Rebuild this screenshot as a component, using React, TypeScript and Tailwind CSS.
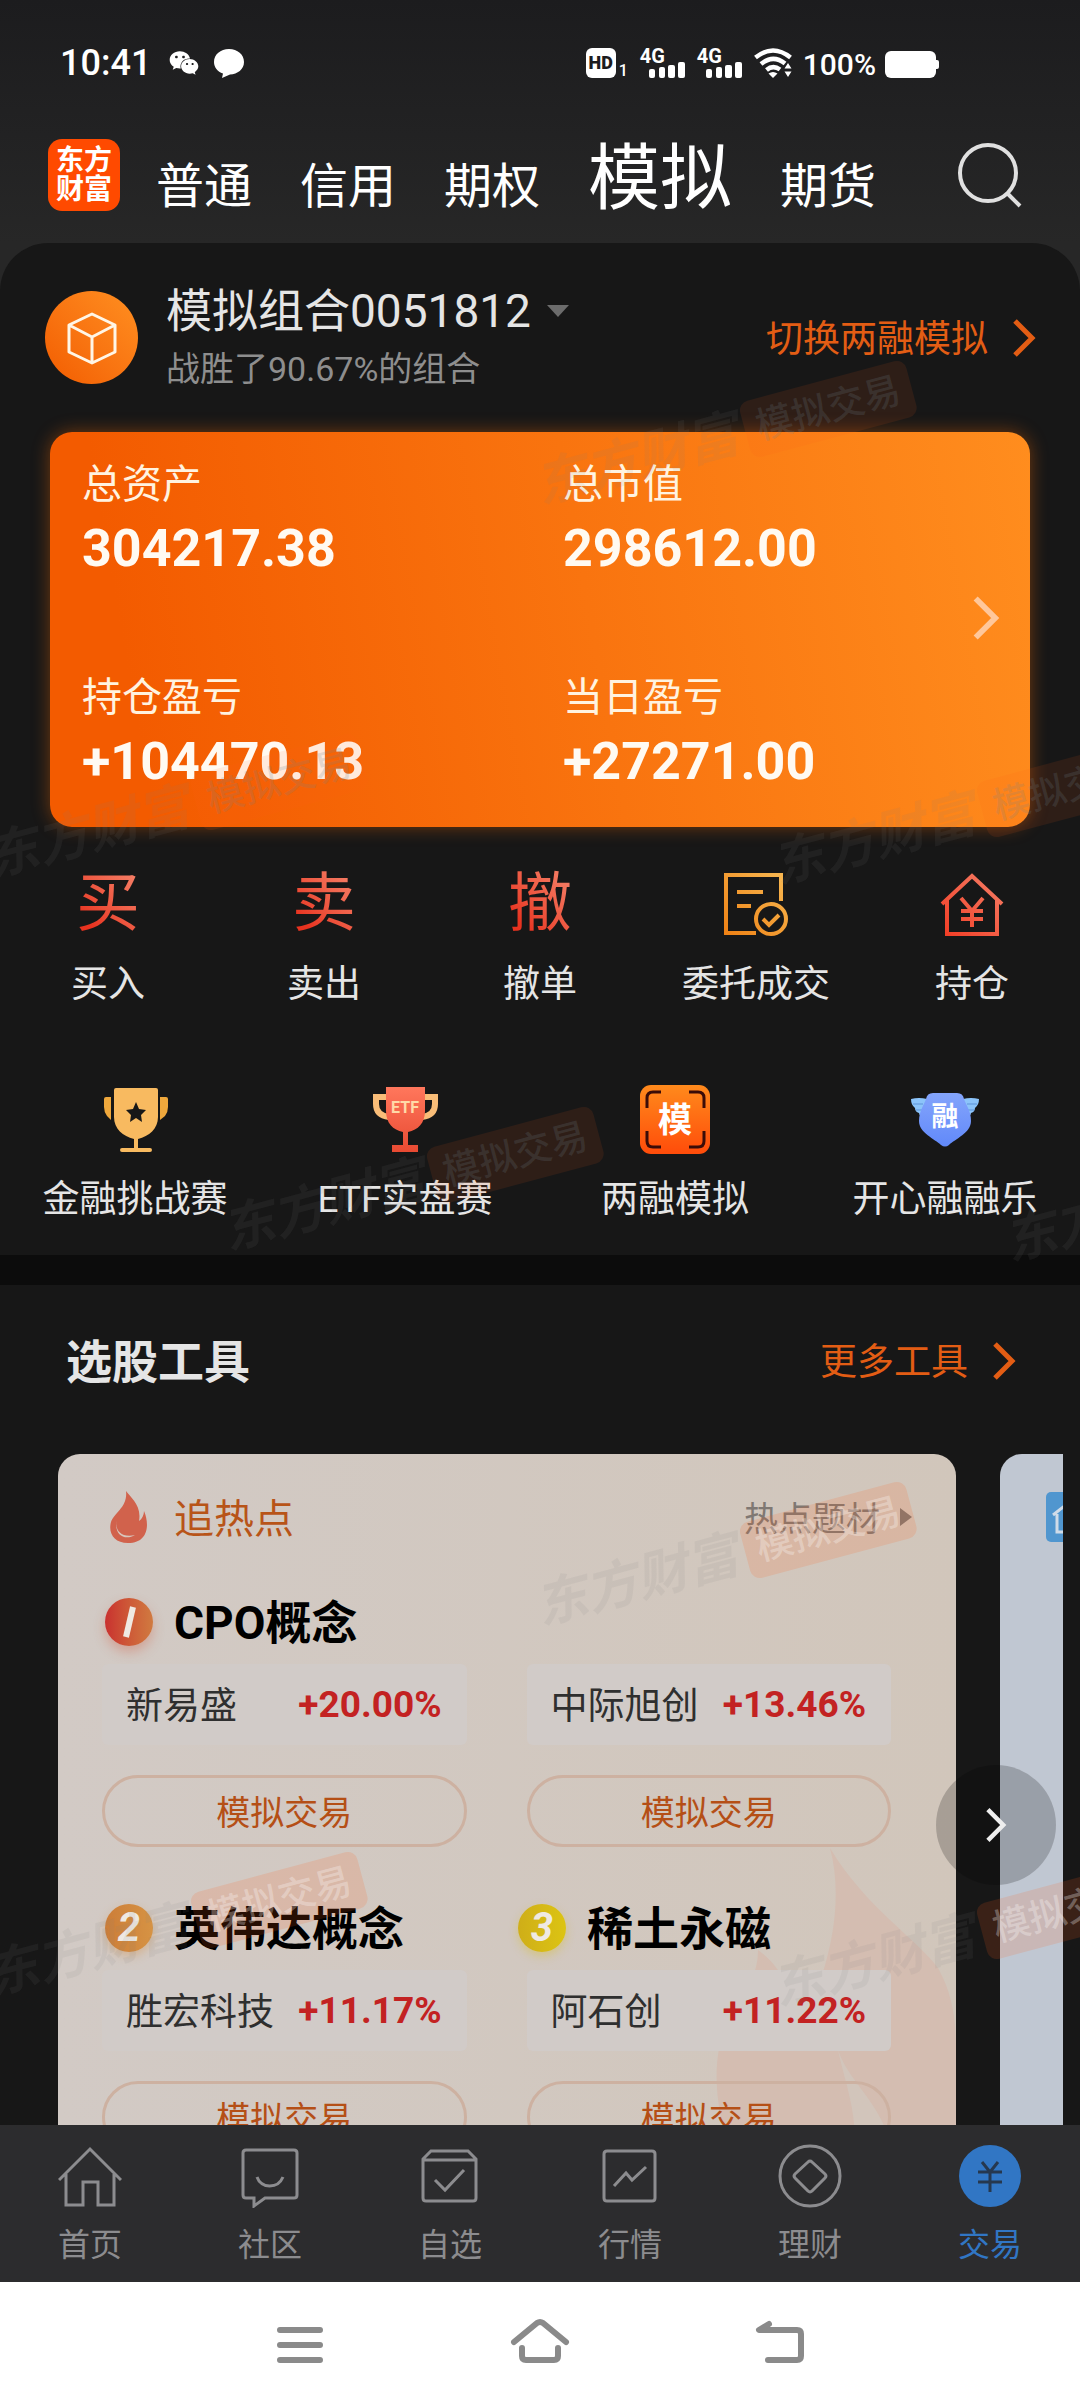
import React, { useState } from "react";
import { FaWeixin } from "react-icons/fa";

const accountTabs = ["普通", "信用", "期权", "模拟", "期货"];

const assets = [
  { label: "总资产", value: "304217.38" },
  { label: "总市值", value: "298612.00" },
  { label: "持仓盈亏", value: "+104470.13" },
  { label: "当日盈亏", value: "+27271.00" },
];

const firstStocks = [
  { name: "新易盛", change: "+20.00%" },
  { name: "中际旭创", change: "+13.46%" },
];

const secondStocks = [
  { name: "胜宏科技", change: "+11.17%" },
  { name: "阿石创", change: "+11.22%" },
];

// Centre points of the repeated background marks
const watermarks = [
  { x: 724, y: 437, light: false },
  { x: 175, y: 810, light: false },
  { x: 961, y: 817, light: false },
  { x: 411, y: 1183, light: false },
  { x: 1193, y: 1194, light: false },
  { x: 724, y: 1558, light: true },
  { x: 175, y: 1928, light: true },
  { x: 961, y: 1939, light: true },
];

function Chevron({ className }: { className: string }) {
  return (
    <svg viewBox="0 0 24 40" fill="none" stroke="currentColor" className={className} aria-hidden="true">
      <path d="M3 3 L20 20 L3 37" strokeWidth="5" />
    </svg>
  );
}

function SignalBars() {
  return (
    <span className="relative block h-[30px] w-[45px]">
      <span className="absolute left-0 top-0 text-[20px] font-bold leading-[16px]">4G</span>
      <svg viewBox="0 0 45 30" className="h-[30px] w-[45px]" fill="currentColor" aria-hidden="true">
        <rect x="9" y="21" width="6" height="9" rx="2" />
        <rect x="19" y="19" width="6" height="11" rx="2" />
        <rect x="28" y="17" width="7" height="13" rx="2" />
        <rect x="38" y="14" width="7" height="16" rx="2" />
      </svg>
    </span>
  );
}

function StatusBar() {
  return (
    <div className="flex h-[126px] shrink-0 items-center pl-[60px] pr-[141px] text-white">
      <span className="text-[36px] font-medium leading-[40px]">10:41</span>
      <FaWeixin className="ml-[18px] h-[30px] w-[30px]" aria-hidden="true" />
      <svg viewBox="0 0 30 30" className="ml-[15px] h-[30px] w-[30px]" fill="currentColor" aria-hidden="true">
        <path d="M15 1 C23.500 1 30 6.500 30 14 C30 21.500 23.500 26 16 26.500 L8 30 L9 25.500 C3.500 23.500 0 19.500 0 14 C0 6.500 6.500 1 15 1 Z" />
      </svg>
      <div className="ml-auto flex items-end">
        <span className="flex h-[30px] w-[30px] items-center justify-center rounded-[6px] bg-white text-[18px] font-black leading-[30px] text-[#1c1c1e]">
          HD
        </span>
        <span className="ml-[3px] mr-3 text-[16px] font-medium leading-[14px]">1</span>
        <SignalBars />
        <span className="w-3" />
        <SignalBars />
        <svg viewBox="0 0 38 30" className="ml-[12px] h-[30px] w-[38px]" aria-hidden="true">
          <g fill="none" stroke="#fff" strokeWidth="4.500">
            <path d="M1.500 9.500 Q19 -4.500 36.500 9.500" />
            <path d="M7 16 Q19 6 31 15.500" />
            <path d="M12.500 22 Q19 16.500 26 21.500" />
          </g>
          <path d="M14.500 25.500 Q19 22.500 23.500 25.500 L19 30 Z" fill="#fff" />
          <path d="M34 15 L37.500 20.500 H30.500 Z M34 29 L37.500 23.500 H30.500 Z" fill="#fff" />
        </svg>
        <span className="ml-[11px] text-[30px] font-medium leading-[26px]">100%</span>
        <svg viewBox="0 0 54 27" className="ml-[9px] h-[27px] w-[54px]" fill="currentColor" aria-hidden="true">
          <rect width="51" height="27" rx="6" />
          <rect x="48" y="9" width="6" height="9" rx="2" />
        </svg>
      </div>
    </div>
  );
}

function Header() {
  const [activeTab, setActiveTab] = useState("模拟");

  return (
    <header className="flex h-[117px] shrink-0 items-center pb-[19px] pl-12 pr-[57px] text-white">
      <div className="w-[72px] shrink-0 rounded-[14px] bg-[#ff4a00] py-[7px] text-center text-[28px] font-bold leading-[29px]">
        东方
        <br />
        财富
      </div>
      <nav className="ml-9 flex items-baseline gap-12 pt-4">
        {accountTabs.map((tab) => (
          <button
            key={tab}
            onClick={() => setActiveTab(tab)}
            className={
              tab === activeTab
                ? "text-[72px] leading-[80px]"
                : "text-[48px] leading-[80px]"
            }
          >
            {tab}
          </button>
        ))}
      </nav>
      <button aria-label="搜索" className="ml-auto">
        <svg viewBox="0 0 66 66" className="h-[66px] w-[66px]" fill="none" stroke="#e0e0e0" strokeWidth="4" aria-hidden="true">
          <circle cx="31" cy="31" r="28" />
          <path d="M50 51 L63 64" />
        </svg>
      </button>
    </header>
  );
}

function PortfolioRow() {
  return (
    <div className="flex h-[189px] items-center pl-[45px] pr-[44px]">
      <div className="flex h-[93px] w-[93px] items-center justify-center rounded-full bg-linear-to-tr from-[#f25c00] to-[#ff8f20]">
        <svg viewBox="0 0 50 54" className="h-[54px] w-[50px]" fill="none" stroke="#fff6e6" strokeWidth="3" strokeLinejoin="round" aria-hidden="true">
          <path d="M25 3 L48 14 V41 L25 52 L2 41 V14 Z M2 14 L25 26 L48 14 M25 26 V52" />
        </svg>
      </div>
      <div className="ml-7 pt-1">
        <button className="flex items-center text-[46px] leading-[58px] text-[#e5e5e5]">
          模拟组合0051812
          <svg viewBox="0 0 22 12" className="ml-4 h-3 w-[22px]" fill="#6c6c6c" aria-hidden="true">
            <path d="M0 0 H22 L11 12 Z" />
          </svg>
        </button>
        <p className="text-[34px] leading-[58px] text-[#8e8e8e]">战胜了90.67%的组合</p>
      </div>
      <a href="#margin" className="ml-auto flex items-center text-[37px] leading-[48px] text-[#e35d14]">
        <span className="pt-1">切换两融模拟</span>
        <Chevron className="ml-6 h-10 w-6" />
      </a>
    </div>
  );
}

function AssetCard() {
  return (
    <section className="mx-[50px] flex items-center rounded-[22px] bg-linear-[80deg] from-[#f35b00] from-10% to-[#ff8d1e] pb-[29px] pl-8 pt-[25px] shadow-[0_0_18px_rgba(255,110,0,0.4)]">
      <dl className="grid flex-1 grid-cols-2 gap-x-3 gap-y-[85px] text-[#fff3e0]">
        {assets.map((asset) => (
          <div key={asset.label}>
            <dt className="text-[40px] leading-[56px]">{asset.label}</dt>
            <dd className="text-[52px] font-bold leading-[72px] text-[#fffaf2]">{asset.value}</dd>
          </div>
        ))}
      </dl>
      <button aria-label="资产详情" className="-ml-[60px] mb-5 mr-[30px]">
        <Chevron className="h-[46px] w-[28px] text-[#ffc79a]" />
      </button>
    </section>
  );
}

function GlyphIcon({ char }: { char: string }) {
  return (
    <span className="bg-linear-to-tr from-[#e8321f] from-20% to-[#f5836b] bg-clip-text text-[64px] leading-[68px] text-transparent">
      {char}
    </span>
  );
}

function OrdersIcon() {
  return (
    <svg viewBox="0 0 66 66" className="h-[68px] w-[66px]" fill="none" stroke="url(#orders)" strokeWidth="4" aria-hidden="true">
      <defs>
        <linearGradient id="orders" x1="0" y1="66" x2="66" y2="0" gradientUnits="userSpaceOnUse">
          <stop offset="0" stopColor="#ee7f12" />
          <stop offset="1" stopColor="#f8bb55" />
        </linearGradient>
      </defs>
      <path d="M58 30 V4 H3 V62 H33" />
      <path d="M14 21 H40 M14 35 H28" />
      <circle cx="48" cy="48" r="15" />
      <path d="M40 48 L46 54 L56 44" />
    </svg>
  );
}

function PositionIcon() {
  return (
    <svg viewBox="0 0 66 66" className="h-[68px] w-[66px]" fill="none" stroke="url(#position)" strokeWidth="4" aria-hidden="true">
      <defs>
        <linearGradient id="position" x1="0" y1="66" x2="66" y2="0" gradientUnits="userSpaceOnUse">
          <stop offset="0" stopColor="#f23a22" />
          <stop offset="1" stopColor="#f5836b" />
        </linearGradient>
      </defs>
      <path d="M3 33 L33 5 L63 33 M8 29 V63 H58 V29" />
      <path d="M22 27 L33 40 L44 27 M22 40 H44 M22 48 H44 M33 40 V56" />
    </svg>
  );
}

const actions = [
  { label: "买入", icon: <GlyphIcon char="买" /> },
  { label: "卖出", icon: <GlyphIcon char="卖" /> },
  { label: "撤单", icon: <GlyphIcon char="撤" /> },
  { label: "委托成交", icon: <OrdersIcon /> },
  { label: "持仓", icon: <PositionIcon /> },
];

function GoldCupIcon() {
  return (
    <svg viewBox="0 0 72 72" className="h-[72px] w-[72px]" aria-hidden="true">
      <path d="M5 14 Q5 12 7 12 H12 V35 L8 31 Q5 27 5 22 Z M69 14 Q69 12 67 12 H61 V35 L66 31 Q69 27 69 22 Z" fill="#efa83c" />
      <path d="M17 3 H57 Q59 3 59 5 V32 C59 44 50 51 39 54 V63 H51 Q53 63 53 65 T51 67 H23 Q21 67 21 65 T23 63 H35 V54 C24 51 15 44 15 32 V5 Q15 3 17 3 Z" fill="#f8ba60" />
      <path d="M37 17 L40 24 L47 25 L42 30 L43 37 L37 33 L31 37 L32 30 L27 25 L34 24 Z" fill="#171717" />
    </svg>
  );
}

function EtfCupIcon() {
  return (
    <svg viewBox="0 0 72 72" className="h-[72px] w-[72px]" aria-hidden="true">
      <defs>
        <linearGradient id="etf" x1="0" y1="0" x2="0" y2="1">
          <stop offset="0" stopColor="#ff775c" />
          <stop offset="1" stopColor="#e84a32" />
        </linearGradient>
      </defs>
      <path d="M20 12 H7 V19 C7 27 12 31 20 32 M53 12 H66 V19 C66 27 61 31 53 32" fill="none" stroke="#f9bd78" strokeWidth="6" />
      <path d="M17 2 H56 V26 C56 38 49 45 39 47 V60 H49 V67 H23 V60 H34 V47 C24 45 17 38 17 26 Z" fill="url(#etf)" />
      <text x="36" y="28" textAnchor="middle" fontSize="16" fontWeight="700" fill="#ffd9a8">
        ETF
      </text>
    </svg>
  );
}

function MarginIcon() {
  return (
    <svg viewBox="0 0 72 72" className="h-[72px] w-[72px]" aria-hidden="true">
      <defs>
        <linearGradient id="margin" x1="0" y1="0" x2="0" y2="1">
          <stop offset="0" stopColor="#ff8a1c" />
          <stop offset="1" stopColor="#ff4c0a" />
        </linearGradient>
      </defs>
      <rect x="1" y="0" width="70" height="69" rx="11" fill="url(#margin)" />
      <path d="M22 7 H14 Q8 7 8 13 V23 M50 7 H59 Q65 7 65 13 V23 M8 46 V56 Q8 62 14 62 H22 M65 46 V56 Q65 62 59 62 H50" fill="none" stroke="#3a0c08" strokeWidth="3" />
      <text x="36" y="47" textAnchor="middle" fontSize="34" fontWeight="700" fill="#fff">
        模
      </text>
    </svg>
  );
}

function WingIcon() {
  return (
    <svg viewBox="0 0 72 72" className="h-[72px] w-[72px]" aria-hidden="true">
      <defs>
        <linearGradient id="wing" x1="0" y1="0" x2="0" y2="1">
          <stop offset="0" stopColor="#84a4fb" />
          <stop offset="1" stopColor="#6189fa" />
        </linearGradient>
      </defs>
      <path d="M2 14 Q10 12 18 14 V32 Q10 32 10 28 Q6 27 6 23 Q2 20 2 14 Z M70 14 Q62 12 54 14 V32 Q62 32 62 28 Q66 27 66 23 Q70 20 70 14 Z" fill="#8cc4fa" />
      <path d="M4 19 H14 M7 25 H14 M68 19 H58 M65 25 H58" stroke="#5c93d8" strokeWidth="1" />
      <path d="M24 8 H48 Q54 8 55 14 C57 20 62 26 62 36 C62 48 46 54 40 60 Q36 63 32 60 C26 54 10 48 10 36 C10 26 15 20 17 14 Q18 8 24 8 Z" fill="url(#wing)" />
      <text x="36" y="41" textAnchor="middle" fontSize="27" fontWeight="700" fill="#fff">
        融
      </text>
    </svg>
  );
}

const contests = [
  { label: "金融挑战赛", icon: <GoldCupIcon /> },
  { label: "ETF实盘赛", icon: <EtfCupIcon /> },
  { label: "两融模拟", icon: <MarginIcon /> },
  { label: "开心融融乐", icon: <WingIcon /> },
];

function Shortcuts() {
  return (
    <section className="pb-[31px] pt-[43px] text-[37px] leading-[48px] text-[#e5e5e5]">
      <div className="grid grid-cols-5">
        {actions.map((action) => (
          <button key={action.label} className="flex flex-col items-center gap-[23px]">
            {action.icon}
            {action.label}
          </button>
        ))}
      </div>
      <div className="mt-[76px] grid grid-cols-4">
        {contests.map((contest) => (
          <button key={contest.label} className="flex flex-col items-center gap-[19px] whitespace-nowrap">
            {contest.icon}
            {contest.label}
          </button>
        ))}
      </div>
    </section>
  );
}

function RankTitle({ rank, badge, children }: { rank: string; badge: string; children: React.ReactNode }) {
  return (
    <div className="flex h-[84px] w-[413px] items-center">
      <span className={`flex h-12 w-12 items-center justify-center rounded-full text-[40px] font-bold italic leading-[48px] text-[#efe9e2] ${badge}`}>
        {rank === "1" ? (
          <svg viewBox="0 0 48 48" className="h-12 w-12" stroke="currentColor" strokeWidth="6" aria-label="1">
            <path d="M28 9 L21 39" />
          </svg>
        ) : (
          rank
        )}
      </span>
      <h3 className="ml-[21px] pt-0.5 text-[46px] font-bold leading-[60px] text-black">{children}</h3>
    </div>
  );
}

function StockPair({ stocks }: { stocks: { name: string; change: string }[] }) {
  return (
    <div className="ml-11 mr-[65px] grid grid-cols-2 gap-x-[60px]">
      {stocks.map((stock) => (
        <div key={stock.name}>
          <div className="flex h-[81px] items-center justify-between rounded-[6px] bg-[#d1cbc8] pl-6 pr-[25px]">
            <span className="pt-1 text-[37px] leading-[48px] text-[#2f2f2f]">{stock.name}</span>
            <span className="text-[37px] font-bold leading-[48px] text-[#c32222]">{stock.change}</span>
          </div>
          <button className="mt-[30px] h-[72px] w-full rounded-full border-[3px] border-[#cdb1a1] pt-1 text-[34px] leading-[60px] text-[#b54f16]">
            模拟交易
          </button>
        </div>
      ))}
    </div>
  );
}

function HotTopicCard() {
  return (
    <article className="relative w-[898px] shrink-0 overflow-hidden rounded-t-[22px] bg-linear-to-r from-[#d2cac5] to-[#d1c6bb]">
      <svg viewBox="0 0 240 320" className="absolute right-0 top-[394px] h-[320px] w-[240px]" aria-hidden="true">
        <path d="M114 0 C150 60 200 90 222 120 C236 145 240 170 240 200 V320 H30 C0 290 -10 210 14 170 C26 150 42 130 42 102 C70 122 76 150 84 180 C110 130 130 60 114 0 Z" fill="#d4bdb1" />
        <path d="M122 202 C135 240 175 260 178 320 H132 C148 280 130 240 122 202 Z" fill="#d2c5bb" />
      </svg>
      <div className="relative">
        <div className="flex h-[126px] items-center pl-[50px] pr-[44px]">
          <svg viewBox="0 0 40 52" className="h-[52px] w-10" aria-hidden="true">
            <path d="M18 0 C22 6 34 14 31 30 C34 28 36 24 36 20 C42 34 40 52 20 52 C6 52 0 42 3 31 C6 22 20 16 18 0 Z" fill="#d1624c" />
            <path d="M9 28 C6 40 14 47 27 44 C17 50 5 44 9 28 Z" fill="#d8c6bd" />
          </svg>
          <h3 className="ml-[26px] pt-1.5 text-[40px] leading-[56px] text-[#b85418]">追热点</h3>
          <a href="#topics" className="ml-auto flex items-center text-[34px] leading-[48px] text-[#7f7873]">
            <span className="pt-1">热点题材</span>
            <svg viewBox="0 0 12 18" className="ml-5 h-[18px] w-3" fill="#7f7873" aria-hidden="true">
              <path d="M0 0 L12 9 L0 18 Z" />
            </svg>
          </a>
        </div>
        <div className="ml-[47px] flex">
          <RankTitle rank="1" badge="bg-linear-to-r from-[#c92f2f] to-[#d07a40] shadow-[0_6px_12px_rgba(210,90,60,0.35)]">
            CPO概念
          </RankTitle>
        </div>
        <StockPair stocks={firstStocks} />
        <div className="ml-[47px] mt-[39px] flex">
          <RankTitle rank="2" badge="bg-linear-to-r from-[#cc7d38] to-[#d69344] shadow-[0_4px_10px_rgba(215,145,70,0.4)]">
            英伟达概念
          </RankTitle>
          <RankTitle rank="3" badge="bg-linear-to-r from-[#cfae18] to-[#dcc412] shadow-[0_4px_10px_rgba(215,190,40,0.4)]">
            稀土永磁
          </RankTitle>
        </div>
        <StockPair stocks={secondStocks} />
      </div>
    </article>
  );
}

function Tools() {
  return (
    <section className="flex min-h-0 flex-1 flex-col border-t-[30px] border-[#0c0c0c]">
      <div className="flex h-[169px] shrink-0 items-center pb-[17px] pl-[66px] pr-[64px]">
        <h2 className="pt-0.5 text-[46px] font-bold leading-[60px] text-[#e5e5e5]">选股工具</h2>
        <a href="#tools" className="ml-auto flex items-center text-[37px] leading-[48px] text-[#e35d14]">
          <span className="pt-1">更多工具</span>
          <Chevron className="ml-6 h-10 w-6" />
        </a>
      </div>
      <div className="relative min-h-0 flex-1 pl-[58px] pr-[17px]">
        <div className="flex h-full gap-11 overflow-hidden">
          <HotTopicCard />
          <article className="flex-1 overflow-hidden rounded-tl-[22px] bg-[#c0c7d2] pl-[46px] pt-[38px]">
            <svg viewBox="0 0 50 50" className="h-[50px] w-[50px]" aria-hidden="true">
              <rect width="50" height="50" rx="5" fill="#5096cf" />
              <path d="M7 23 L25 9 L43 23 M11 22 V40 H39 V22" fill="none" stroke="#cfdbe8" strokeWidth="3" />
            </svg>
          </article>
        </div>
        <button
          aria-label="下一页"
          className="absolute right-6 top-[311px] flex h-[120px] w-[120px] items-center justify-center rounded-full bg-black/20 text-[#eeeeee]"
        >
          <Chevron className="h-[36px] w-[22px]" />
        </button>
      </div>
    </section>
  );
}

const navItems = [
  {
    label: "首页",
    icon: <path d="M1 36 L32 5 L63 36 M8 30 V61 H25 V38 H40 V61 H56 V30" />,
  },
  {
    label: "社区",
    icon: (
      <path d="M8 6 H56 Q59 6 59 9 V51 Q59 54 56 54 H27 L16 62 V54 H8 Q5 54 5 51 V9 Q5 6 8 6 Z M19 33 C23 45 40 45 45 33" />
    ),
  },
  {
    label: "自选",
    icon: (
      <path d="M5 15 L13 7 H50 L58 15 V54 Q58 57 55 57 H8 Q5 57 5 54 Z M5 16 H58 M17 36 L27 46 L46 26" />
    ),
  },
  {
    label: "行情",
    icon: (
      <path d="M9 7 H54 Q57 7 57 10 V54 Q57 57 54 57 H9 Q6 57 6 54 V10 Q6 7 9 7 Z M16 42 L28 29 L34 36 L48 23" />
    ),
  },
  {
    label: "理财",
    icon: (
      <>
        <circle cx="32" cy="32" r="30" />
        <path d="M30 18 Q32 16 34 18 L47 30 Q49 32 47 34 L34 47 Q32 49 30 47 L17 34 Q15 32 17 30 Z" />
      </>
    ),
  },
  {
    label: "交易",
    icon: (
      <>
        <circle cx="32" cy="32" r="31" fill="#3176c4" stroke="none" />
        <path d="M24 18 L32 28 L40 18 M20 28 H44 M20 38 H44 M32 28 V48" stroke="#26384f" />
      </>
    ),
  },
];

function BottomNav() {
  return (
    <nav className="grid h-[157px] shrink-0 grid-cols-6 bg-[#2c2c2e] pt-[19px]">
      {navItems.map((item) => (
        <a
          key={item.label}
          href={`#${item.label}`}
          className={`flex flex-col items-center gap-5 text-[32px] leading-[34px] ${
            item.label === "交易" ? "text-[#3176c4]" : "text-[#8c8c8f]"
          }`}
        >
          <svg viewBox="0 0 64 64" className="h-16 w-16" fill="none" stroke="currentColor" strokeWidth="3" aria-hidden="true">
            {item.icon}
          </svg>
          {item.label}
        </a>
      ))}
    </nav>
  );
}

function SystemBar() {
  return (
    <div className="flex h-[126px] shrink-0 items-start justify-center bg-white pt-9 text-[#8a8a8a]">
      <button aria-label="菜单" className="flex w-60 justify-center">
        <svg viewBox="0 0 60 48" className="h-12 w-[60px]" stroke="currentColor" strokeWidth="6" strokeLinecap="round" aria-hidden="true">
          <path d="M10 12 H50 M10 27 H50 M10 42 H50" />
        </svg>
      </button>
      <button aria-label="主页" className="flex w-60 justify-center">
        <svg viewBox="0 0 60 48" className="h-12 w-[60px]" fill="none" stroke="currentColor" strokeWidth="6" strokeLinecap="round" strokeLinejoin="round" aria-hidden="true">
          <path d="M4 24 L27 5 Q30 3 33 5 L56 24 M12 30 V38 Q12 42 16 42 H44 Q48 42 48 38 V30" />
        </svg>
      </button>
      <button aria-label="返回" className="flex w-60 justify-center">
        <svg viewBox="0 0 60 48" className="h-12 w-[60px]" fill="none" stroke="currentColor" strokeWidth="6" strokeLinecap="round" strokeLinejoin="round" aria-hidden="true">
          <path d="M19 6 L9 12 H47 Q51 12 51 16 V38 Q51 42 47 42 H18" />
        </svg>
      </button>
    </div>
  );
}

function Watermarks() {
  return (
    <div className="pointer-events-none absolute inset-0 overflow-hidden" aria-hidden="true">
      {watermarks.map((mark) => (
        <div
          key={`${mark.x}-${mark.y}`}
          className="absolute flex -translate-x-1/2 -translate-y-1/2 -rotate-[15deg] items-center gap-2 whitespace-nowrap"
          style={{ left: mark.x, top: mark.y }}
        >
          <span className="text-[52px] font-bold italic leading-[60px] text-[#808080]/10">东方财富</span>
          <span
            className={`rounded-[10px] px-3 text-[37px] font-medium leading-[58px] ${
              mark.light
                ? "bg-[#ff5a14]/15 text-white/30"
                : "bg-[#ff5a14]/10 text-[#6e8490]/20"
            }`}
          >
            模拟交易
          </span>
        </div>
      ))}
    </div>
  );
}

export default function App() {
  return (
    <div className="relative flex h-screen flex-col overflow-hidden bg-linear-to-b from-[#1c1c1e] to-[#272727] to-[243px] font-['Roboto','Noto_Sans_CJK_SC',sans-serif]">
      <StatusBar />
      <Header />
      <main className="flex min-h-0 flex-1 flex-col rounded-t-[48px] bg-[#171717]">
        <PortfolioRow />
        <AssetCard />
        <Shortcuts />
        <Tools />
      </main>
      <Watermarks />
      <BottomNav />
      <SystemBar />
    </div>
  );
}
